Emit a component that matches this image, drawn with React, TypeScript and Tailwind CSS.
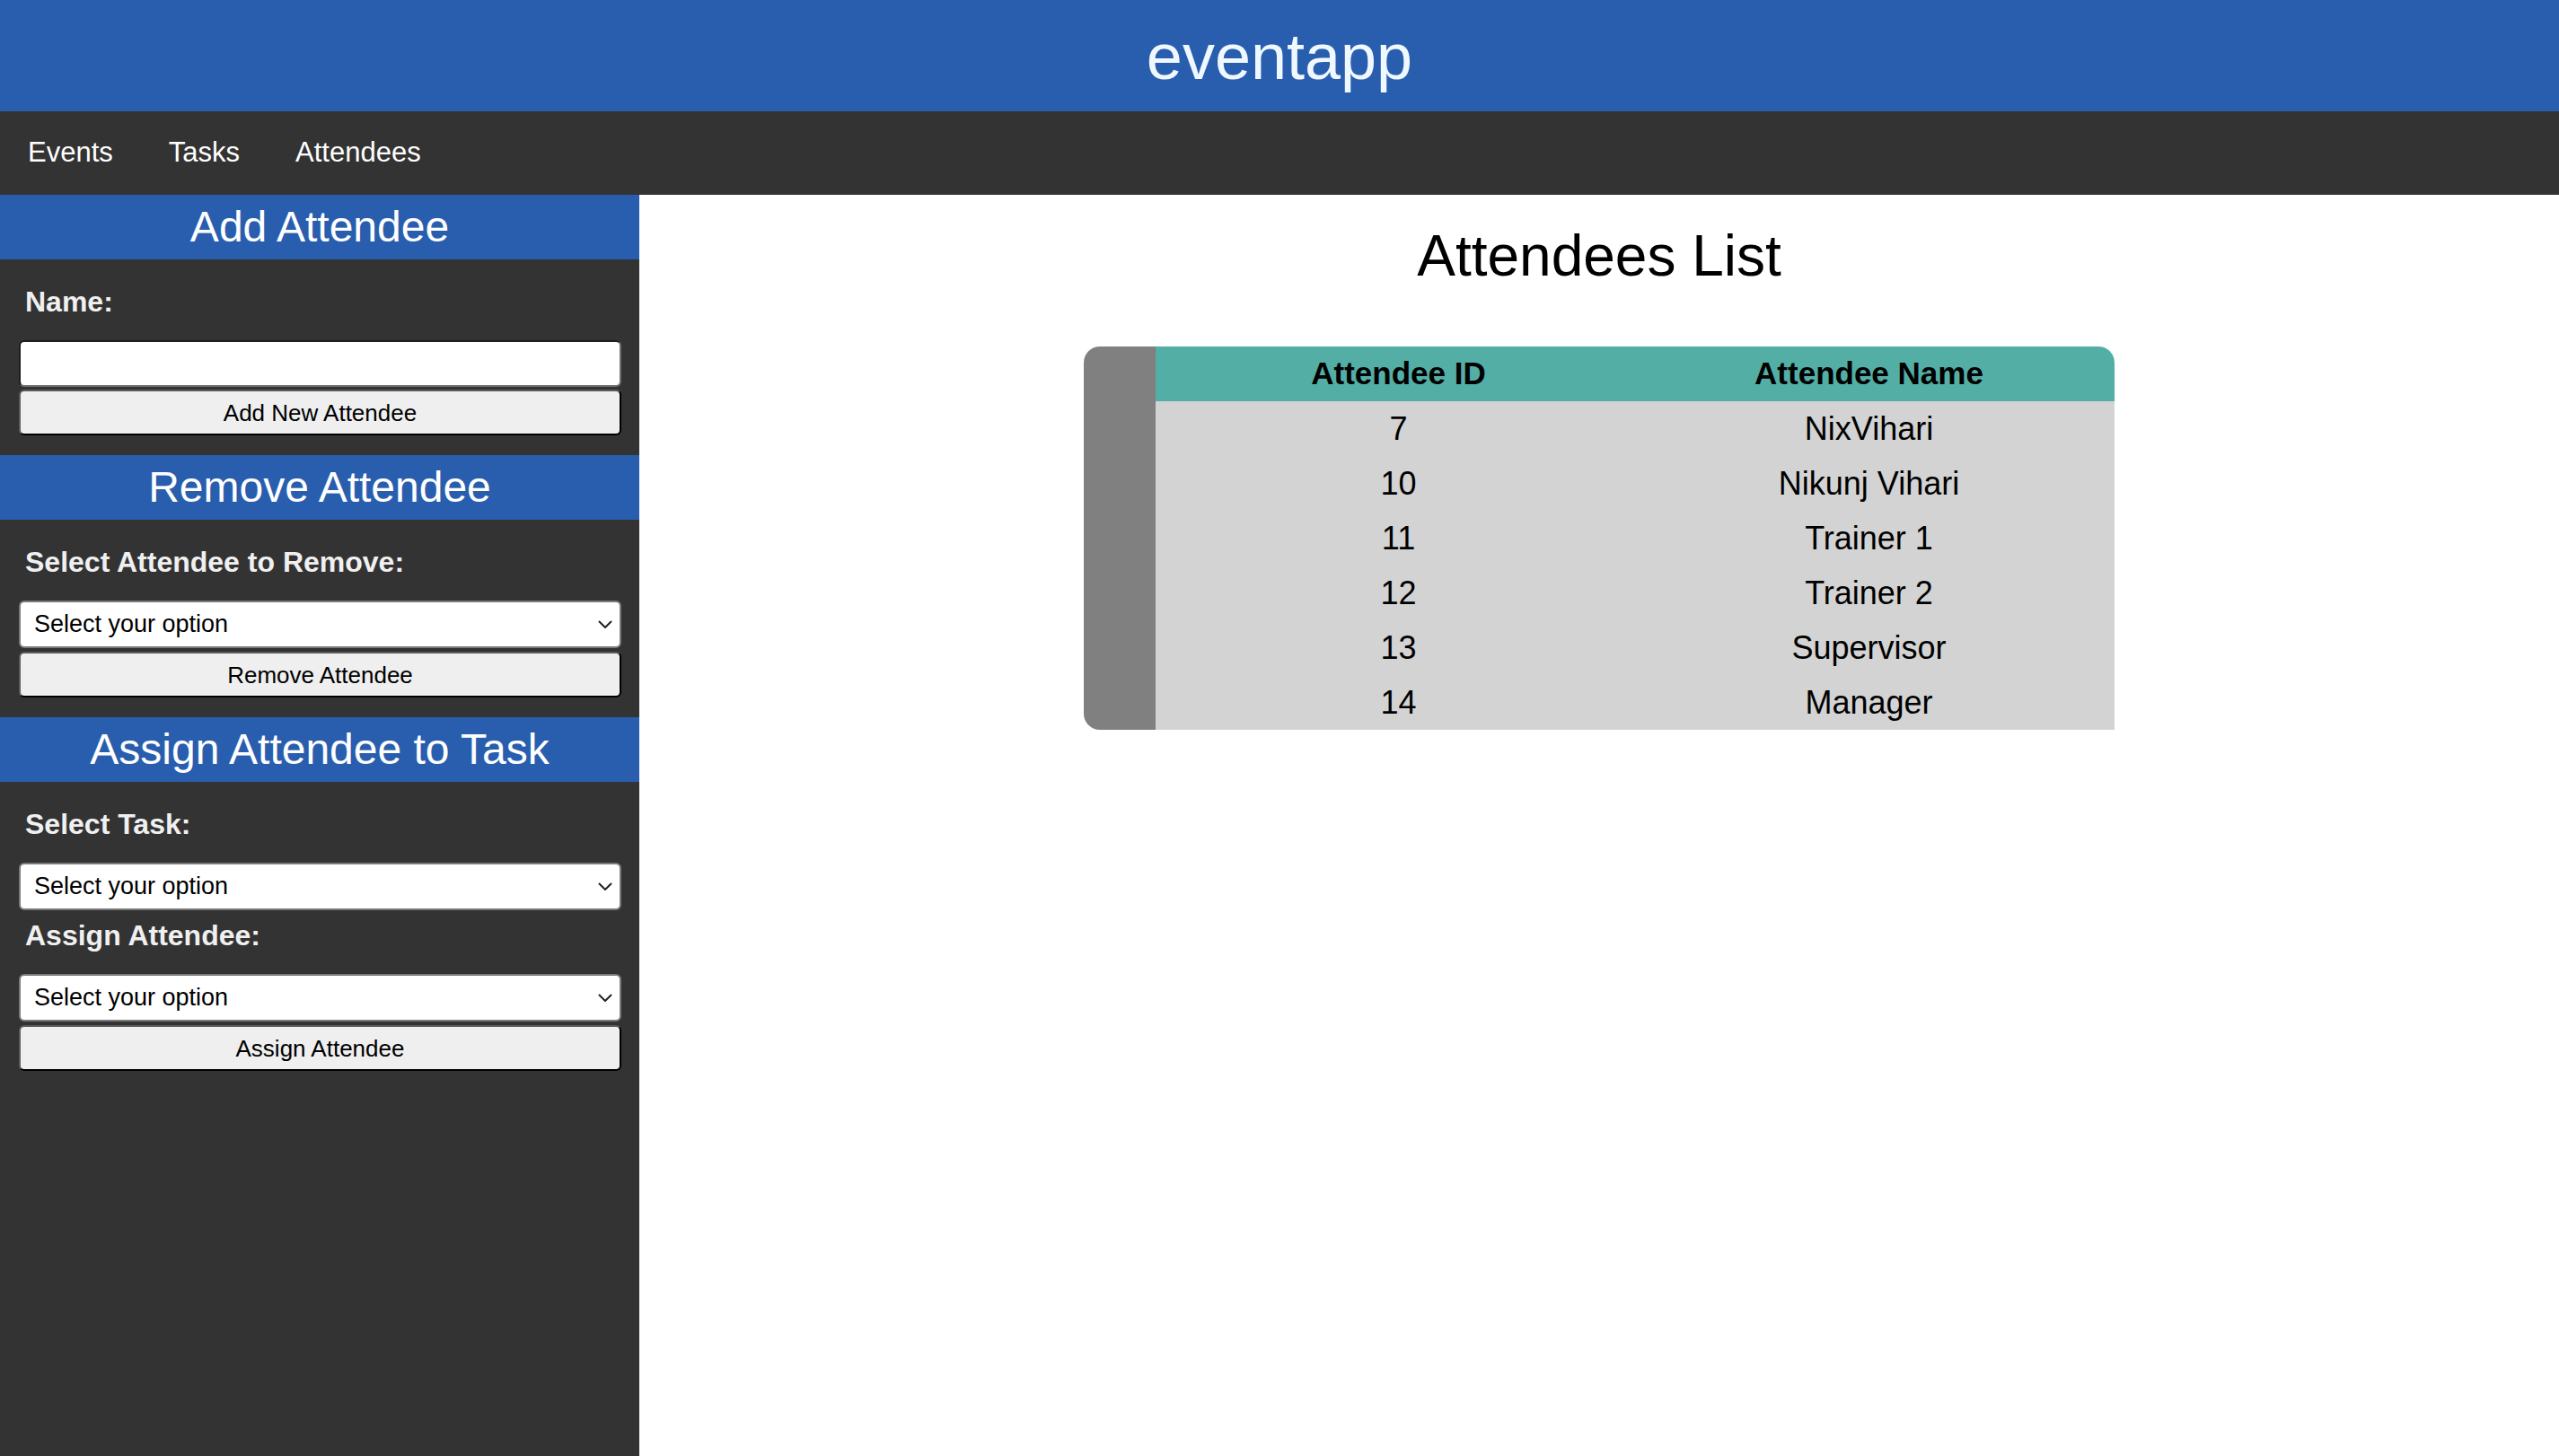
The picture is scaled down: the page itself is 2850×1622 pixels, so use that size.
import React from "react";

const font = { fontFamily: '"Liberation Sans", Arial, sans-serif' };

function Chevron() {
  return (
    <svg width="16" height="10" viewBox="0 0 16 10" className="absolute right-[8px] top-1/2 -translate-y-1/2" fill="none">
      <path d="M1.5 1.5 L8 8 L14.5 1.5" stroke="#222" strokeWidth="2" strokeLinecap="round" strokeLinejoin="round" />
    </svg>
  );
}

function SelectBox() {
  return (
    <div className="relative h-[53px] w-full rounded-[6px] border-2 border-[#7a7a7a] bg-white flex items-center pl-[15px]">
      <span className="text-[27px] text-black leading-none">Select your option</span>
      <Chevron />
    </div>
  );
}

function Btn({ label }: { label: string }) {
  return (
    <div className="mt-[4px] h-[51px] w-full rounded-[6px] border-2 border-t-[#5c5c5c] border-l-[#5c5c5c] border-r-black border-b-black bg-[#efefef] flex items-center justify-center">
      <span className="text-[26px] text-black leading-none">{label}</span>
    </div>
  );
}

function Bar({ title }: { title: string }) {
  return (
    <div className="h-[72px] bg-[#295eaf] flex items-center justify-center">
      <span className="text-[48px] text-white leading-none">{title}</span>
    </div>
  );
}

function Label({ text, first }: { text: string; first?: boolean }) {
  return (
    <div className={(first ? "mt-[29px]" : "mt-[10px]") + " mb-[24px] h-[37px] leading-[37px] ml-[7px] text-[32px] font-bold text-[#f0f0f0]"}>
      {text}
    </div>
  );
}

const rows: [string, string][] = [
  ["7", "NixVihari"],
  ["10", "Nikunj Vihari"],
  ["11", "Trainer 1"],
  ["12", "Trainer 2"],
  ["13", "Supervisor"],
  ["14", "Manager"],
];

export default function App() {
  return (
    <div className="h-[1622px] flex flex-col bg-white" style={font}>
      <header className="h-[124px] shrink-0 bg-[#295eaf] flex items-center justify-center">
        <span className="text-[72px] leading-none text-[#f0f8ff] pt-[2px]">eventapp</span>
      </header>
      <nav className="h-[93px] shrink-0 bg-[#333333] flex items-center">
        <span className="px-[31px] text-[31px] text-white">Events</span>
        <span className="px-[31px] text-[31px] text-white">Tasks</span>
        <span className="px-[31px] text-[31px] text-white">Attendees</span>
      </nav>
      <div className="flex flex-1">
        <aside className="w-[712px] shrink-0 bg-[#333333]">
          <Bar title="Add Attendee" />
          <div className="pl-[21px] pr-[20px] pb-[22px]">
            <Label text="Name:" first />
            <div className="h-[52px] w-full rounded-[6px] border-2 border-t-[#1e1e1e] border-l-[#1e1e1e] border-r-[#6e6e6e] border-b-[#6e6e6e] bg-white" />
            <div className="mt-[-1px]">
              <Btn label="Add New Attendee" />
            </div>
          </div>
          <Bar title="Remove Attendee" />
          <div className="pl-[21px] pr-[20px] pb-[22px]">
            <Label text="Select Attendee to Remove:" first />
            <SelectBox />
            <Btn label="Remove Attendee" />
          </div>
          <Bar title="Assign Attendee to Task" />
          <div className="pl-[21px] pr-[20px] pb-[22px]">
            <Label text="Select Task:" first />
            <SelectBox />
            <Label text="Assign Attendee:" />
            <SelectBox />
            <Btn label="Assign Attendee" />
          </div>
        </aside>
        <main className="flex-1 flex flex-col items-center">
          <h1 className="mt-[31px] h-[74px] leading-[74px] text-[64px] text-black">Attendees List</h1>
          <div className="mt-[64px] w-[1148px] flex rounded-tl-[18px] rounded-tr-[18px] rounded-bl-[18px] overflow-hidden">
            <div className="w-[80px] shrink-0 bg-[#808080]" />
            <div className="flex-1 flex flex-col">
              <div className="h-[61px] bg-[#53afa6] flex items-center pr-[20px]">
                <div className="w-[541px] text-center text-[35px] font-bold text-black">Attendee ID</div>
                <div className="flex-1 text-center text-[35px] font-bold text-black">Attendee Name</div>
              </div>
              {rows.map(([id, name]) => (
                <div key={id} className="h-[61px] bg-[#d3d3d3] flex items-center pr-[20px]">
                  <div className="w-[541px] text-center text-[36px] text-black">{id}</div>
                  <div className="flex-1 text-center text-[36px] text-black">{name}</div>
                </div>
              ))}
            </div>
          </div>
        </main>
      </div>
    </div>
  );
}
